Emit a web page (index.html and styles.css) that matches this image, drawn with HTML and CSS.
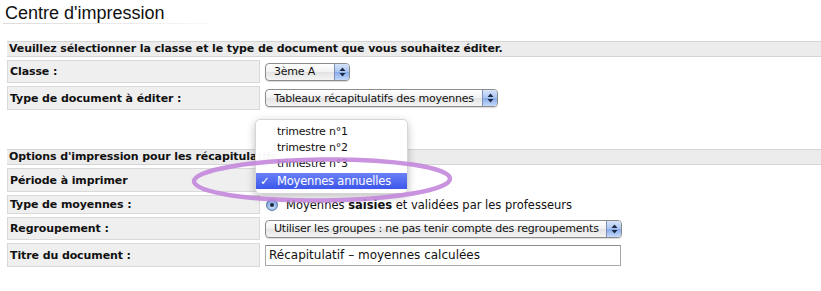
FILE: index.html
```
<!DOCTYPE html>
<html lang="fr">
<head>
    <meta charset="UTF-8">
    <title>Centre d'impression</title>
    <link rel="stylesheet" href="styles.css">
</head>
<body>
    <div class="page">
        <h1 class="title">Centre d'impression</h1>
        <div class="title-rule"></div>

        <div class="section section-top">
            <div class="section-head">Veuillez sélectionner la classe et le type de document que vous souhaitez éditer.</div>

            <div class="label">Classe :</div>
            <div class="field">
                <div class="select select-small">
                    <span class="select-text">3ème A</span>
                    <span class="select-arrows">
                        <svg width="7" height="10" viewBox="0 0 7 10"><path d="M3.5 0.5 L6.5 4 L0.5 4 Z M3.5 9.5 L6.5 6 L0.5 6 Z" fill="#1f2a44"/></svg>
                    </span>
                </div>
            </div>

            <div class="label">Type de document à éditer :</div>
            <div class="field">
                <div class="select select-medium">
                    <span class="select-text">Tableaux récapitulatifs des moyennes</span>
                    <span class="select-arrows">
                        <svg width="7" height="10" viewBox="0 0 7 10"><path d="M3.5 0.5 L6.5 4 L0.5 4 Z M3.5 9.5 L6.5 6 L0.5 6 Z" fill="#1f2a44"/></svg>
                    </span>
                </div>
            </div>
        </div>

        <div class="section section-options">
            <div class="section-head">Options d'impression pour les récapitulatifs</div>

            <div class="label">Période à imprimer</div>
            <div class="field"></div>

            <div class="label">Type de moyennes :</div>
            <div class="field">
                <span class="radio"><span class="radio-dot"></span></span>
                <span class="radio-text">Moyennes <b>saisies</b> et validées par les professeurs</span>
            </div>

            <div class="label">Regroupement :</div>
            <div class="field">
                <div class="select select-wide">
                    <span class="select-text">Utiliser les groupes : ne pas tenir compte des regroupements</span>
                    <span class="select-arrows">
                        <svg width="7" height="10" viewBox="0 0 7 10"><path d="M3.5 0.5 L6.5 4 L0.5 4 Z M3.5 9.5 L6.5 6 L0.5 6 Z" fill="#1f2a44"/></svg>
                    </span>
                </div>
            </div>

            <div class="label">Titre du document :</div>
            <div class="field">
                <div class="text-input">Récapitulatif – moyennes calculées</div>
            </div>
        </div>

        <!-- open popup menu of the "Période" select -->
        <ul class="popup-menu">
            <li>trimestre n°1</li>
            <li>trimestre n°2</li>
            <li>trimestre n°3</li>
            <li class="selected"><span class="check">✓</span>Moyennes annuelles</li>
        </ul>

        <!-- hand-drawn highlight ring -->
        <svg class="highlight-ring" width="272" height="54" viewBox="0 0 272 54">
            <ellipse cx="136" cy="26" rx="128" ry="20.5" fill="none" stroke="#c487dc" stroke-opacity="0.9" stroke-width="4.5" transform="rotate(-0.6 136 26)"/>
        </svg>
    </div>
</body>
</html>
```

FILE: styles.css
```
body {
    margin: 0;
    background: #fff;
    overflow: hidden;
    font-family: "DejaVu Sans", Verdana, sans-serif;
    font-size: 11px;
    color: #111;
}

.page {
    position: relative;
    width: 900px;
    padding-top: 3px;
}

.title {
    margin: 0 0 0 5px;
    font-family: "Liberation Sans", Arial, sans-serif;
    font-weight: normal;
    font-size: 18px;
    line-height: 20px;
    color: #111;
}

.title-rule {
    margin-left: 3px;
    width: 208px;
    height: 1px;
    background: linear-gradient(to right, #dcdcdc, #eeeeee 70%, #fafafa);
}

.section {
    margin-left: 7px;
    display: grid;
    grid-template-columns: 253px 1fr;
    column-gap: 2px;
    row-gap: 3px;
}

.section-top {
    margin-top: 17px;
    grid-template-rows: 16px 23px 24px;
}

.section-options {
    margin-top: 39px;
    grid-template-rows: 16px 24px 19px 23px 24px;
}

.section-head {
    grid-column: 1 / -1;
    background: #ececec;
    border-top: 1px solid #d5d5d5;
    border-bottom: 1px solid #d5d5d5;
    font-weight: bold;
    padding: 0 2px;
    line-height: 14px;
    letter-spacing: -0.1px;
}

.label {
    background: #efefef;
    border: 1px solid #d9d9d9;
    font-weight: bold;
    padding: 0 2px;
    display: flex;
    align-items: center;
    letter-spacing: -0.1px;
}

.field {
    display: flex;
    align-items: center;
    padding-left: 3px;
}

/* Aqua style select */
.select {
    box-sizing: border-box;
    height: 18px;
    display: flex;
    align-items: center;
    border: 1px solid #8c8c8c;
    border-radius: 4px;
    background: linear-gradient(#ffffff, #f1f1f1 50%, #e3e3e3 51%, #f4f4f4);
    box-shadow: 0 1px 1px rgba(0, 0, 0, 0.15);
    overflow: hidden;
    font-size: 11px;
    letter-spacing: -0.22px;
}

.select-small {
    width: 85px;
}

.select-medium {
    width: 233px;
}

.select-wide {
    width: 357px;
}

.select-text {
    flex: 1;
    padding-left: 8px;
    white-space: nowrap;
}

.select-arrows {
    width: 14px;
    height: 16px;
    display: flex;
    align-items: center;
    justify-content: center;
    border-left: 1px solid #7d8fb5;
    background: linear-gradient(#d6e4fb, #a9c4f1 50%, #86a9ea 51%, #c4dafa);
}

.radio {
    box-sizing: border-box;
    width: 12px;
    height: 12px;
    margin-left: 1px;
    border-radius: 50%;
    border: 1px solid #5d7aa8;
    background: radial-gradient(circle at 50% 65%, #d8e8fb, #7ea6e0 70%, #5b86c9);
    display: flex;
    align-items: center;
    justify-content: center;
}

.radio-dot {
    width: 4px;
    height: 4px;
    border-radius: 50%;
    background: #1a2a44;
}

.radio-text {
    margin-left: 8px;
    font-size: 11.5px;
}

.text-input {
    box-sizing: border-box;
    width: 356px;
    height: 21px;
    border: 1px solid #a9a9a9;
    border-top-color: #8e8e8e;
    padding: 0 3px;
    line-height: 19px;
    font-size: 12px;
}

/* popup menu overlay */
.popup-menu {
    position: absolute;
    left: 255px;
    top: 119px;
    width: 151px;
    margin: 0;
    padding: 4px 0;
    list-style: none;
    background: rgba(255, 255, 255, 0.97);
    border: 1px solid #d6d6d6;
    border-radius: 5px;
    box-shadow: 0 3px 8px rgba(0, 0, 0, 0.25);
    font-size: 11px;
    letter-spacing: -0.2px;
}

.popup-menu li {
    height: 16px;
    line-height: 16px;
    padding-left: 21px;
    position: relative;
}

.popup-menu li.selected {
    margin-top: 1px;
    color: #fff;
    background: linear-gradient(#6a81f6, #3c57ea);
    font-size: 11.5px;
}

.check {
    position: absolute;
    left: 4px;
    font-weight: bold;
}

.highlight-ring {
    position: absolute;
    left: 186px;
    top: 154px;
}
```
